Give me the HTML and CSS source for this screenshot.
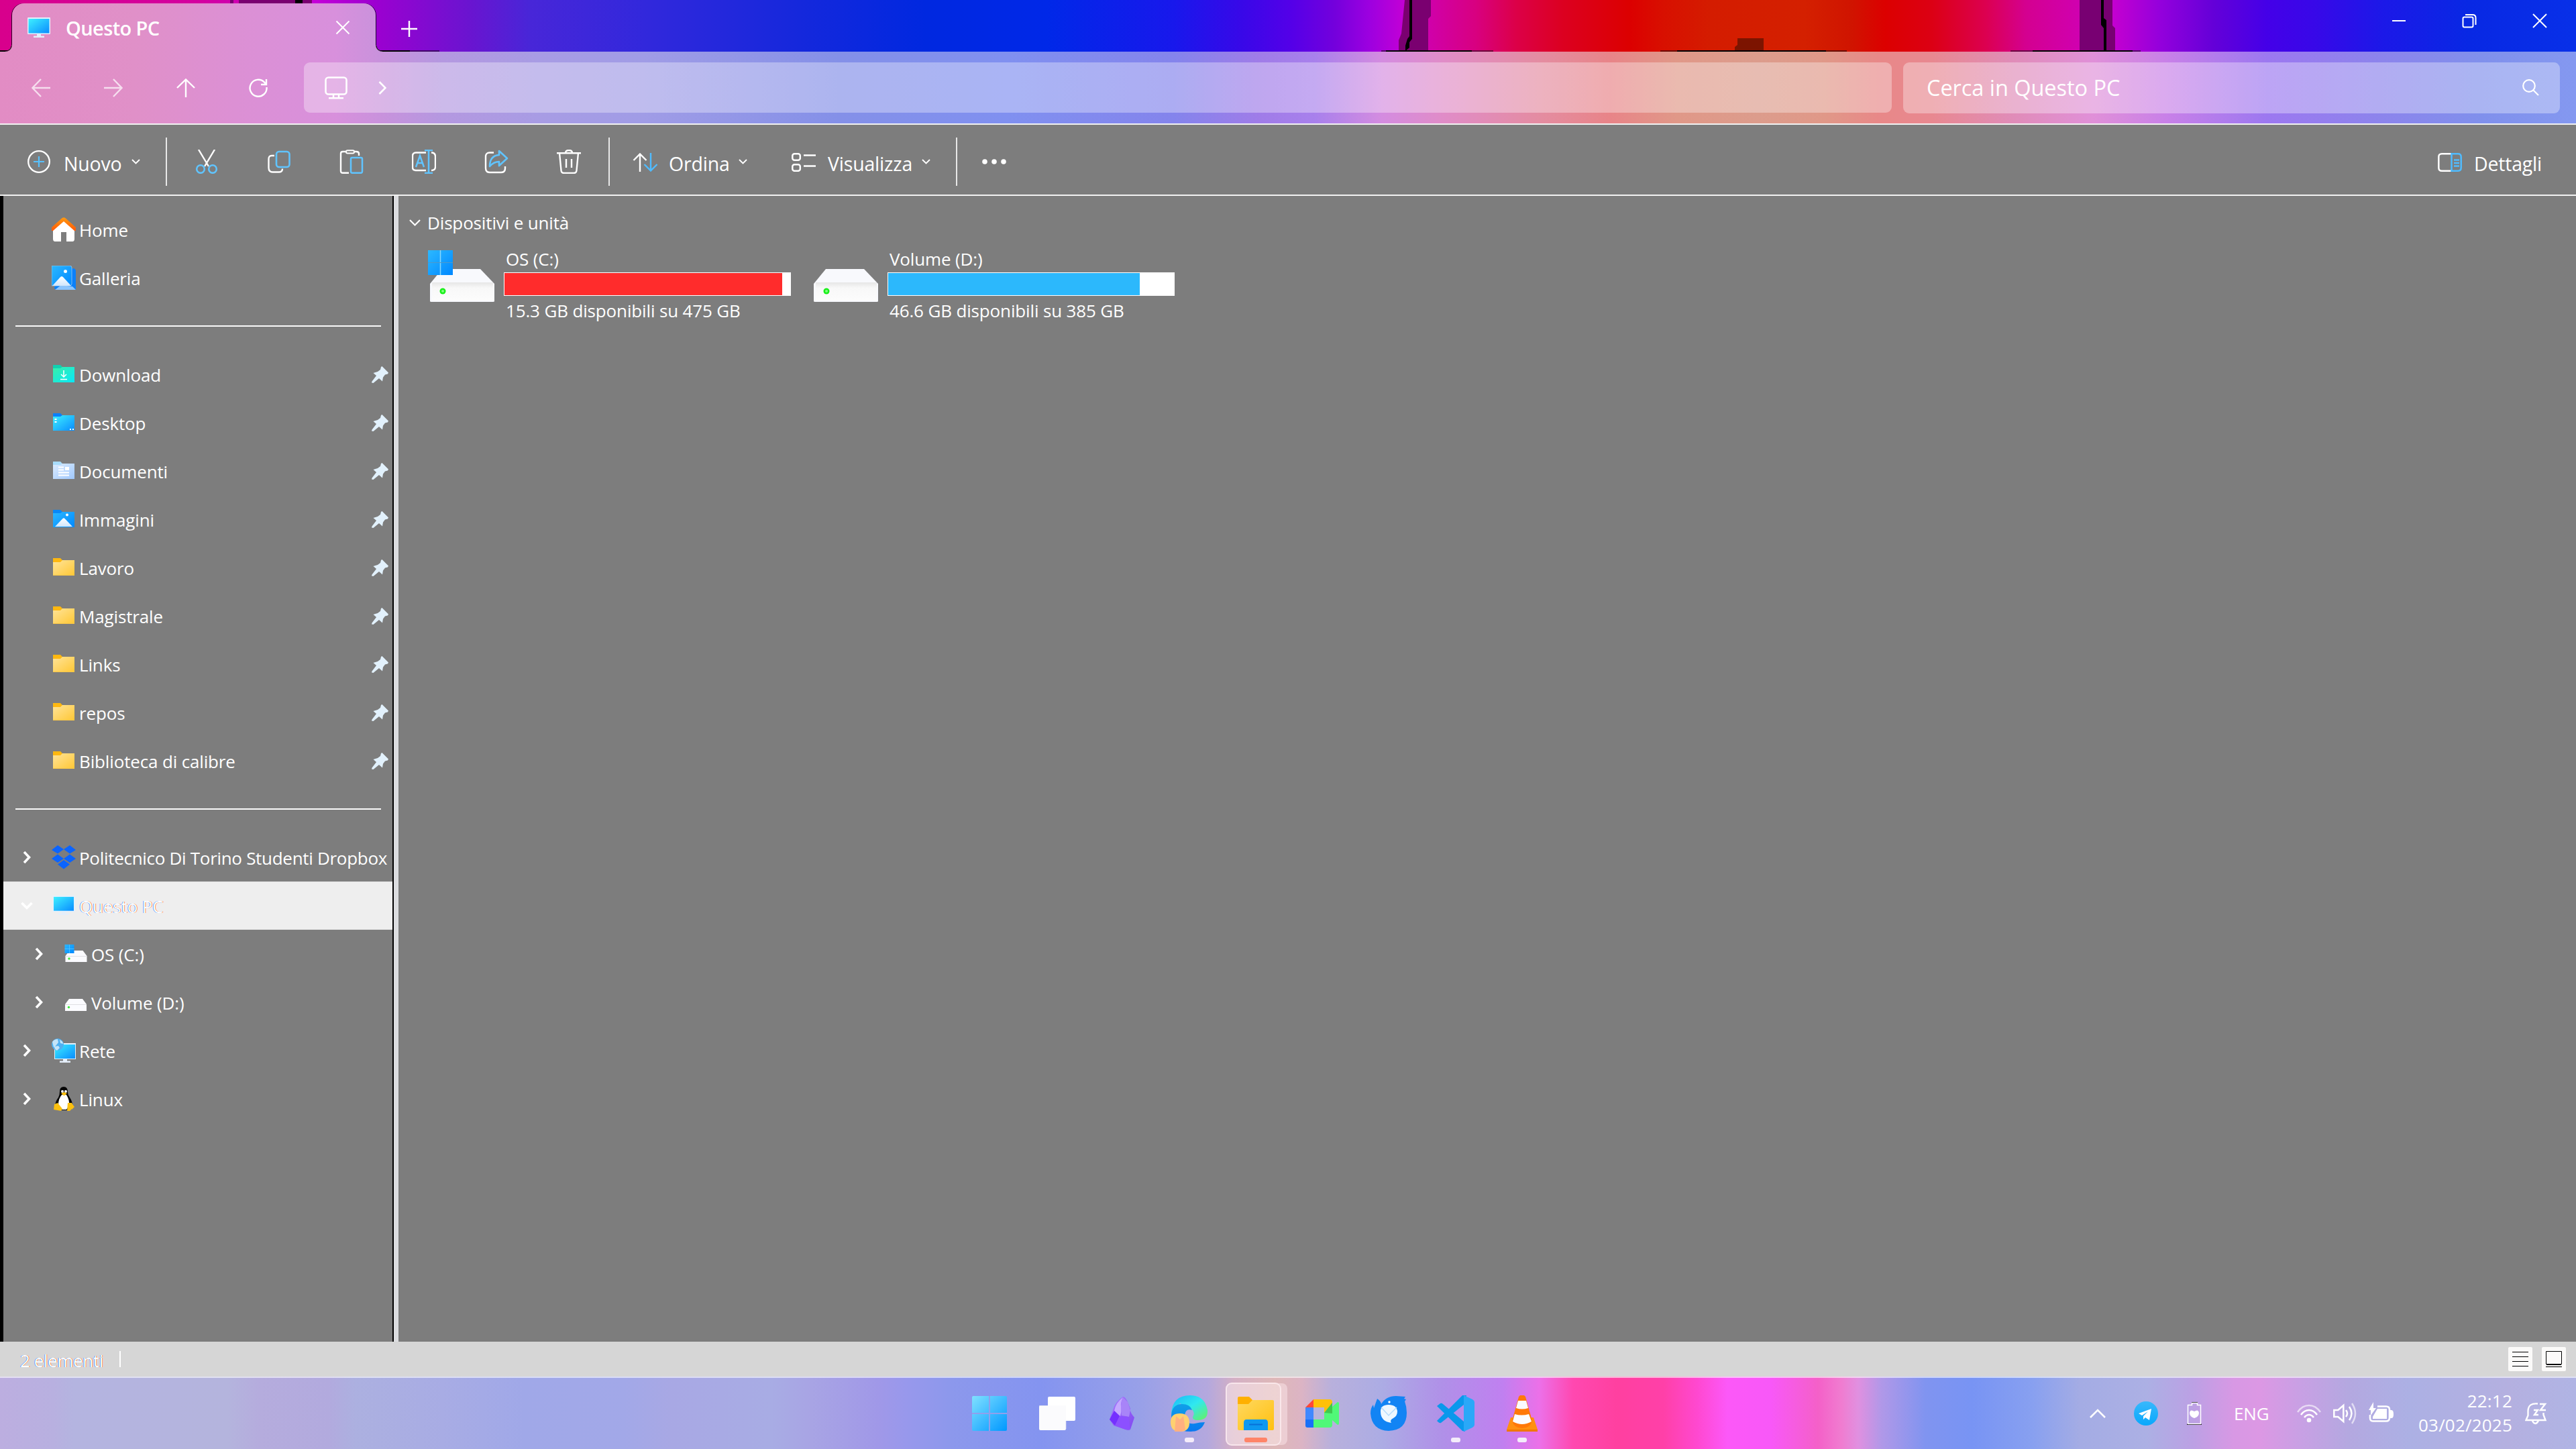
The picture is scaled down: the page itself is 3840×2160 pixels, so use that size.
FILE: index.html
```html
<!DOCTYPE html>
<html lang="it">
<head>
<meta charset="utf-8">
<title>Questo PC</title>
<link rel="stylesheet" href="styles.css">
</head>
<body>
<svg class="defs" aria-hidden="true">
  <defs>
    <linearGradient id="gScreen" x1="0" y1="0" x2="1" y2="1"><stop offset="0" stop-color="#3df0ff"/><stop offset="1" stop-color="#0a8cff"/></linearGradient>
    <linearGradient id="gBlue" x1="0" y1="0" x2="1" y2="1"><stop offset="0" stop-color="#2cb8ff"/><stop offset="1" stop-color="#0088ff"/></linearGradient>
    <linearGradient id="gYellow" x1="0" y1="0" x2="1" y2="1"><stop offset="0" stop-color="#ffe49a"/><stop offset="1" stop-color="#ffc734"/></linearGradient>
    <linearGradient id="gGreen" x1="0" y1="0" x2="1" y2="1"><stop offset="0" stop-color="#38f0a8"/><stop offset="1" stop-color="#08e8f8"/></linearGradient>
    <linearGradient id="gDoc" x1="0" y1="0" x2="1" y2="1"><stop offset="0" stop-color="#dcecff"/><stop offset="1" stop-color="#a0c8fc"/></linearGradient>
    <linearGradient id="gRoof" x1="0" y1="0" x2="0" y2="1"><stop offset="0" stop-color="#ff9a10"/><stop offset="1" stop-color="#ff5808"/></linearGradient>
    <linearGradient id="gHill" x1="0" y1="0" x2="0" y2="1"><stop offset="0" stop-color="#fff"/><stop offset="1" stop-color="#cfe6fc"/></linearGradient>
    <linearGradient id="gFront" x1="0" y1="0" x2="0" y2="1"><stop offset="0" stop-color="#e6e6e6"/><stop offset=".3" stop-color="#f8f8f8"/><stop offset="1" stop-color="#fcfcfc"/></linearGradient>
    <linearGradient id="gStart" x1="0" y1="0" x2="1" y2="1"><stop offset="0" stop-color="#80e0ff"/><stop offset="1" stop-color="#0098ff"/></linearGradient>
    <linearGradient id="gEdge" x1="0" y1="0" x2="1" y2="1"><stop offset="0" stop-color="#18b8f8"/><stop offset=".5" stop-color="#30e8f0"/><stop offset="1" stop-color="#68f060"/></linearGradient>
    <linearGradient id="gEdge2" x1="0" y1="0" x2="0" y2="1"><stop offset="0" stop-color="#10a0e8"/><stop offset="1" stop-color="#0878f0"/></linearGradient>
    <linearGradient id="gExp" x1="0" y1="0" x2="1" y2="1"><stop offset="0" stop-color="#ffd860"/><stop offset="1" stop-color="#ffc010"/></linearGradient>
    <linearGradient id="gTel" x1="0" y1="0" x2="0" y2="1"><stop offset="0" stop-color="#38b8fc"/><stop offset="1" stop-color="#08a8fc"/></linearGradient>
    <linearGradient id="gObs" x1="0" y1="0" x2="1" y2="1"><stop offset="0" stop-color="#a878ff"/><stop offset="1" stop-color="#8048f0"/></linearGradient>
    <symbol id="pc" viewBox="0 0 34 30"><rect x="0" y="0" width="34" height="25" rx="1" fill="#e4f0fc"/><rect x="1.500" y="2" width="31" height="21.500" fill="url(#gScreen)"/><path d="M14 25h6v2.500h5V30H9v-2.500h5z" fill="#e4eefa"/></symbol>
    <symbol id="home" viewBox="0 0 36 36"><path d="M2 18 18 3l16 15v14q0 4-3 4h-9V22h-8v14H5q-3 0-3-4z" fill="#fff"/><path d="M0 20v-5L15 1.500q3-2.500 6 0L36 15v5h-2L18 6 2 20z" fill="url(#gRoof)"/></symbol>
    <symbol id="gallery" viewBox="0 0 36 36"><path d="M31 4q5 0 5 4v28H8q-4 0-4-4z" fill="#0a80fa"/><path d="M5 36 14 29 31 31 36 36z" fill="#8cc4fc"/><path d="M0 0h27q3 0 3 3v24q0 3-3 3H0z" fill="url(#gBlue)" stroke="#a0c8ec" stroke-width=".8"/><path d="M1 30 13 17q2-2 4 0l12 13z" fill="url(#gHill)"/><circle cx="20.500" cy="8.500" r="2.500" fill="#fff"/></symbol>
    <symbol id="folder" viewBox="0 0 32 26"><path d="M0 0h11l3 3h18v22H0z" fill="#ffb810"/><path d="M0 6h11l3-3h18v23H0z" fill="url(#gYellow)"/><path d="M0 25.500h32" stroke="#fcc848"/></symbol>
    <symbol id="f-download" viewBox="0 0 32 26"><path d="M0 0h11l3 3h18v22H0z" fill="#10d0b0"/><path d="M0 5h11l3-2h18v23H0z" fill="url(#gGreen)"/><path d="M16 8v10m-4-4 4 4 4-4M11 21.500h10" fill="none" stroke="#fff" stroke-width="1.500"/></symbol>
    <symbol id="f-desktop" viewBox="0 0 32 26"><path d="M0 0h11l3 3h18v22H0z" fill="#0a80f8"/><path d="M0 5h11l3-2h18v23H0z" fill="url(#gScreen)"/><path d="M2.500 9h3m-3 4h3M25 24h2m2 0h2" stroke="#fff" stroke-width="2"/></symbol>
    <symbol id="f-docs" viewBox="0 0 32 26"><path d="M0 0h11l3 3h18v22H0z" fill="#a8dcfc"/><path d="M0 5h11l3-2h18v23H0z" fill="url(#gDoc)"/><path d="M8 8.500h8M8 12.500h8M8 16.500h16M8 20.500h16" stroke="#fff" stroke-width="1.800"/><rect x="18" y="8" width="6" height="5" fill="#fff"/></symbol>
    <symbol id="f-pics" viewBox="0 0 32 26"><path d="M0 0h11l3 3h18v22H0z" fill="#0888f8"/><path d="M0 5h11l3-2h18v23H0z" fill="url(#gBlue)"/><path d="m3 25 11.500-12q1.500-1.500 3 0L29 25z" fill="url(#gHill)"/><circle cx="21" cy="7.500" r="2" fill="#fff"/></symbol>
    <symbol id="pin" viewBox="0 0 25 25"><path d="m14 1 1.500-1L25 9.500l-1 2-4 1-3 4-1 6L11 18l-8.500 7-2.500-.5.500-2L7 14 2.500 10 9 8l4-3z" fill="#e2f1fc"/></symbol>
    <symbol id="dropbox" viewBox="0 0 36 36"><path d="m9 0 9 6-9 6.500L0 7zM27 0l9 7-9 5.500L18 6zM9 13.500l9 6.500-9 6-9-6zM27 13.500l9 6.500-9 6-9-6zM18 22l9 6.500-9 7-9-7z" fill="#0a64ff"/></symbol>
    <symbol id="drive" viewBox="0 0 32 18"><path d="M6 0h20l6 8v10H0V8z" fill="#fbfbff"/><path d="M0 8.500h32" stroke="#e0e0e4"/><circle cx="5.500" cy="12.500" r="1.700" fill="#40e840"/></symbol>
    <symbol id="windrive" viewBox="0 0 33 26"><path d="M7 9h20l6 8v9H1v-9z" fill="#fbfbff"/><path d="M1 17.500h32" stroke="#e0e0e4"/><circle cx="6.500" cy="21" r="1.700" fill="#40e840"/><rect width="14" height="13" fill="url(#gBlue)"/><path d="M7 0v13M0 6.500h14" stroke="#58c8fc" stroke-width=".8"/></symbol>
    <symbol id="net" viewBox="0 0 36 36"><rect x="4" y="7" width="32" height="24" fill="#e4f0fc"/><rect x="5" y="9" width="30" height="21" fill="url(#gScreen)"/><path d="M17 31h6v2.500h5V36H12v-2.500h5z" fill="#e4eefa"/><circle cx="9" cy="9" r="9" fill="#50b0f0"/><path d="M1 5q3-4 8-4l1 5-4 5-3 2zM12 2q5 2 5 6l-4-1zM4 12l6-1 2 3-4 4q-4-2-4-6z" fill="#c4e4f8"/></symbol>
    <symbol id="tux" viewBox="0 0 32 36"><path d="M16 0q6 0 6 8 0 4 3 8 4 6 4 12l-6 7H9l-6-7q1-7 5-12 2-4 2-9 0-7 6-7z" fill="#050505"/><path d="M13 12h7q5 8 4 16l-4 6h-8l-4-7q0-9 5-15z" fill="#fff"/><circle cx="14" cy="7" r="2" fill="#fff"/><circle cx="19" cy="7" r="2" fill="#fff"/><path d="m12 10 4.500-2 4.500 2-4.500 3.500zM2 26l5-2 7 9-2 3L1 34zM22 24h6l3 6-6 6h-4zM29 26l3 4-4 4z" fill="#fbc010"/></symbol>
    <symbol id="chev-r" viewBox="0 0 12 20"><path d="m2 2 7.500 8L2 18" fill="none" stroke="#fff" stroke-width="3.600"/></symbol>
    <symbol id="chev-d" viewBox="0 0 18 12"><path d="m1.500 2 7.500 7.500L16.500 2" fill="none" stroke="#fff" stroke-width="3.600"/></symbol>
    <symbol id="chev-s" viewBox="0 0 13 8"><path d="m1 1 5.500 5.500L12 1" fill="none" stroke="#fff" stroke-width="1.900"/></symbol>
  </defs>
</svg>
<div class="window">
  <header class="titlebar">
    <svg class="shapes" viewBox="0 0 3840 77">
      <path d="M343 0h5v5h-5zM356 0h84v5h-84zM451 0h14v5h-14z" fill="#7a0070"/><path d="M440 0h11v5h-11z"/>
      <path d="M2094 0h39v24l-4 4v49h-44V60l4-10z" fill="#7a0070"/><path d="M2101 0h4v58l-4 5v8l-6 5v-8l3-10 3-4z"/>
      <path d="M3100 0h49v38l4 4v35h-53z" fill="#780072"/><path d="M3132 0h4v27l4 3v47h-4V42l-4-5z"/>
      <path d="M2590 57h39v20h-43V70l4-3z" fill="#7c1400"/>
      <path d="M2059 75h167v2h-167zM2475 75h278v2h-278zM2997 75h194v2h-194zM611 75h44v2h-44z" opacity=".5"/>
      <path d="M0 75h14v2H0zM566 75h45v2h-45zM2066 75h128v2h-128zM2500 75h222v2h-222zM3030 75h149v2h-149z"/>
    </svg>
    <div class="tab">
      <svg width="34" height="30"><use href="#pc"/></svg>
      <span class="tab-name">Questo PC</span>
      <svg width="22" height="22" viewBox="0 0 22 22"><path d="m1.500 1.500 19 19m0-19-19 19" stroke="#fff" stroke-width="2"/></svg>
    </div>
    <svg class="newtab" width="24" height="24" viewBox="0 0 24 24"><path d="M12 0v24M0 12h24" stroke="#fff" stroke-width="2.400"/></svg>
    <div class="winbtns">
      <svg width="22" height="22" viewBox="0 0 22 22"><path d="M1 11h20" stroke="#fff" stroke-width="2"/></svg>
      <svg width="22" height="22" viewBox="0 0 22 22" fill="none" stroke="#fff" stroke-width="2"><rect x="1.500" y="5.500" width="15" height="15" rx="2"/><path d="M5 2h11q4.500 0 4.500 4.500V17"/></svg>
      <svg width="22" height="22" viewBox="0 0 22 22"><path d="m1 1 20 20m0-20L1 21" stroke="#fff" stroke-width="2"/></svg>
    </div>
  </header>
  <nav class="navbar">
    <div class="navbtns">
      <svg class="dim" width="28" height="28" viewBox="0 0 28 28"><path d="M28 14H2M14 1 1.500 14 14 27"/></svg>
      <svg class="dim" width="28" height="28" viewBox="0 0 28 28"><path d="M0 14h26M14 1l12.500 13L14 27"/></svg>
      <svg width="28" height="28" viewBox="0 0 28 28"><path d="M14 28V2M1 14 14 1.500 27 14"/></svg>
      <svg width="28" height="28" viewBox="0 0 28 28"><path d="M26.500 13A12.500 12.500 0 1 1 23 5.500l2.500 3M26 1v8h-8"/></svg>
    </div>
    <div class="address">
      <svg width="34" height="34" viewBox="0 0 34 34"><rect x="1.500" y="1.500" width="31" height="25" rx="4" fill="none" stroke="#fff" stroke-width="2.600"/><path d="M13 27v5m8-5v5M6 32.300h22" stroke="#fff" stroke-width="2.500"/></svg>
      <svg width="12" height="20" viewBox="0 0 12 20"><path d="m1.500 1 9 9-9 9" fill="none" stroke="#fff" stroke-width="2.600"/></svg>
    </div>
    <div class="search">
      <span>Cerca in Questo PC</span>
      <svg width="25" height="25" viewBox="0 0 25 25" fill="none" stroke="#fff" stroke-width="2.200"><circle cx="10" cy="10" r="8.800"/><path d="m16.500 16.500 7.500 7.500"/></svg>
    </div>
  </nav>
  <div class="toolbar">
    <svg width="34" height="34" viewBox="0 0 34 34" fill="none"><circle cx="17" cy="17" r="15.800" stroke="#fff" stroke-width="2.300"/><path d="M17 9v16M9 17h16" stroke="#58c0fc" stroke-width="2.200"/></svg>
    <span class="t-new">Nuovo</span>
    <svg class="car" width="13" height="8"><use href="#chev-s"/></svg>
    <i class="sep s1"></i>
    <div class="cmds">
      <svg width="36" height="36" viewBox="0 0 36 36" fill="none"><path d="m6 0 15 25M30 0 15 25" stroke="#fff" stroke-width="2.400"/><circle cx="9" cy="29" r="5.800" stroke="#60c4ff" stroke-width="2.500"/><circle cx="27" cy="29" r="5.800" stroke="#60c4ff" stroke-width="2.500"/></svg>
      <svg width="36" height="36" viewBox="0 0 36 36" fill="none"><path d="M11 9H7q-4.500 0-4.500 5v13q0 6.500 6 6.500H18q5 0 5-5" stroke="#fff" stroke-width="2.400"/><rect x="14" y="3" width="19.500" height="23" rx="4" stroke="#60c4ff" stroke-width="2.600"/></svg>
      <svg width="36" height="36" viewBox="0 0 36 36" fill="none"><path d="M14 34.800H5q-3 0-3-3V6q0-3 3-3h6m10 0h4q4 0 4 3v3" stroke="#fff" stroke-width="2.400"/><rect x="10" y="1.200" width="12" height="4.300" rx="2" stroke="#fff" stroke-width="2"/><rect x="17" y="12" width="17" height="22.800" rx="2" stroke="#60c4ff" stroke-width="2.500"/></svg>
      <svg width="36" height="36" viewBox="0 0 36 36" fill="none"><path d="M21 4.500H6q-5 0-5 5v17Q1 31 6 31h15M29 4.500q6 0 6 6v15q0 5.500-6 5.500" stroke="#fff" stroke-width="2.400"/><path d="m6 26 6-17 6 17m-10-6h8M25 1v34M19 1h12M19 35h12" stroke="#60c4ff" stroke-width="2.500"/></svg>
      <svg width="36" height="36" viewBox="0 0 36 36" fill="none"><path d="M14 4.500H8q-6 0-6 6v17Q2 34 8 34h17q6 0 6-6v-3" stroke="#fff" stroke-width="2.400"/><path d="M22 2 34 13 22 24v-6q-8 0-14 7Q8 9 22 8z" stroke="#60c4ff" stroke-width="2.600" stroke-linejoin="round"/></svg>
      <svg width="36" height="36" viewBox="0 0 36 36" fill="none" stroke="#fff" stroke-width="2.400"><path d="M0 5.200h36M13 5q0-4 5-4t5 4M4 5l2.500 26q.3 4 4 4h15q3.700 0 4-4L32 5M14 14v13m8-13v13"/></svg>
    </div>
    <i class="sep"></i>
    <svg class="i-sort" width="38" height="28" viewBox="0 0 38 28" fill="none" stroke-width="2.400"><path d="M11 28V2M1.500 11 11 1.500 20.500 11" stroke="#fff"/><path d="M27 0v26M17.500 17l9.500 9.500L36.500 17" stroke="#50bcff"/></svg>
    <span class="t-sort">Ordina</span>
    <svg class="car" width="13" height="8"><use href="#chev-s"/></svg>
    <svg class="i-view" width="36" height="28" viewBox="0 0 36 28" fill="none" stroke="#fff" stroke-width="2.500"><rect x="1.300" y="1.300" width="11.500" height="9.500" rx="3"/><rect x="1.300" y="17.300" width="11.500" height="9.500" rx="3"/><path d="M18 3.500h18M18 19.500h18"/></svg>
    <span class="t-view">Visualizza</span>
    <svg class="car" width="13" height="8"><use href="#chev-s"/></svg>
    <i class="sep s3"></i>
    <svg class="dots" width="36" height="8" viewBox="0 0 36 8" fill="#fff"><circle cx="4" cy="4" r="3.800"/><circle cx="18" cy="4" r="3.800"/><circle cx="32" cy="4" r="3.800"/></svg>
    <svg class="i-det" width="36" height="28" viewBox="0 0 36 28" fill="none" stroke-width="2.500"><path d="M20 1.300H6q-4.700 0-4.700 4.700v16Q1.300 26.700 6 26.700h14" stroke="#fff"/><path d="M20.500 1.300H30q4.700 0 4.700 4.700v16q0 4.700-4.700 4.700h-9.500zM24 10.500h8M24 15h8M24 19.500h8" stroke="#50bcff"/></svg>
    <span class="t-det">Dettagli</span>
  </div>
  <main class="body">
    <aside class="sidebar">
      <div class="row"><svg class="ico" width="36" height="36"><use href="#home"/></svg><span>Home</span></div>
      <div class="row"><svg class="ico" width="36" height="36"><use href="#gallery"/></svg><span>Galleria</span></div>
      <div class="row"><hr></div>
      <div class="row"><svg class="ico" width="36" height="26"><use href="#f-download"/></svg><span>Download</span><svg class="pin"><use href="#pin"/></svg></div>
      <div class="row"><svg class="ico" width="36" height="26"><use href="#f-desktop"/></svg><span>Desktop</span><svg class="pin"><use href="#pin"/></svg></div>
      <div class="row"><svg class="ico" width="36" height="26"><use href="#f-docs"/></svg><span>Documenti</span><svg class="pin"><use href="#pin"/></svg></div>
      <div class="row"><svg class="ico" width="36" height="26"><use href="#f-pics"/></svg><span>Immagini</span><svg class="pin"><use href="#pin"/></svg></div>
      <div class="row"><svg class="ico" width="36" height="26"><use href="#folder"/></svg><span>Lavoro</span><svg class="pin"><use href="#pin"/></svg></div>
      <div class="row"><svg class="ico" width="36" height="26"><use href="#folder"/></svg><span>Magistrale</span><svg class="pin"><use href="#pin"/></svg></div>
      <div class="row"><svg class="ico" width="36" height="26"><use href="#folder"/></svg><span>Links</span><svg class="pin"><use href="#pin"/></svg></div>
      <div class="row"><svg class="ico" width="36" height="26"><use href="#folder"/></svg><span>repos</span><svg class="pin"><use href="#pin"/></svg></div>
      <div class="row"><svg class="ico" width="36" height="26"><use href="#folder"/></svg><span>Biblioteca di calibre</span><svg class="pin"><use href="#pin"/></svg></div>
      <div class="row"><hr></div>
      <div class="row tree"><svg class="exp"><use href="#chev-r"/></svg><svg class="ico" width="36" height="36"><use href="#dropbox"/></svg><span class="long">Politecnico Di Torino Studenti Dropbox</span></div>
      <div class="row tree selected"><svg class="exp"><use href="#chev-d"/></svg><svg class="ico" width="36" height="29"><use href="#pc"/></svg><span class="ghost">Questo PC</span></div>
      <div class="row tree child"><svg class="exp"><use href="#chev-r"/></svg><svg class="ico" width="36" height="26"><use href="#windrive"/></svg><span>OS (C:)</span></div>
      <div class="row tree child"><svg class="exp"><use href="#chev-r"/></svg><svg class="ico low" width="36" height="18"><use href="#drive"/></svg><span>Volume (D:)</span></div>
      <div class="row tree"><svg class="exp"><use href="#chev-r"/></svg><svg class="ico" width="36" height="36"><use href="#net"/></svg><span>Rete</span></div>
      <div class="row tree"><svg class="exp"><use href="#chev-r"/></svg><svg class="ico" width="36" height="36"><use href="#tux"/></svg><span>Linux</span></div>
    </aside>
    <section class="content">
      <h2><svg width="17" height="10" viewBox="0 0 17 10"><path d="m1 1 7.500 7.500L16 1" fill="none" stroke="#fff" stroke-width="2.200"/></svg>Dispositivi e unità</h2>
      <div class="drives">
        <article class="drive">
          <svg width="100" height="77" viewBox="0 0 100 77"><path d="M21 28h57l21 22v26q0 1-2 1H5q-2 0-2-1V50z" fill="#f8f9fd"/><path d="M6 48h91v27H6z" fill="url(#gFront)"/><circle cx="22" cy="61" r="4.500" fill="#18f018"/><circle cx="22" cy="61" r="2" fill="#80ff80"/><path d="M0 0h37v37H0z" fill="url(#gBlue)"/><path d="M18.500 0v37" stroke="#88d8fc" stroke-width="1.500"/><path d="M0 18.500h37" stroke="#5098c8"/></svg>
          <div class="info"><b>OS (C:)</b><div class="meter"><div class="fill full" style="width:414px"></div></div><span class="free">15.3 GB disponibili su 475 GB</span></div>
        </article>
        <article class="drive">
          <svg width="100" height="77" viewBox="0 0 100 77"><path d="M21 28h57l21 22v26q0 1-2 1H5q-2 0-2-1V50z" fill="#f8f9fd"/><path d="M6 48h91v27H6z" fill="url(#gFront)"/><circle cx="22" cy="61" r="4.500" fill="#18f018"/><circle cx="22" cy="61" r="2" fill="#80ff80"/></svg>
          <div class="info"><b>Volume (D:)</b><div class="meter"><div class="fill" style="width:375px"></div></div><span class="free">46.6 GB disponibili su 385 GB</span></div>
        </article>
      </div>
    </section>
  </main>
  <footer class="status">
    <span class="ghost">2 elementi</span><i></i>
    <svg class="v1" width="36" height="36" viewBox="0 0 36 36"><rect width="36" height="36" rx="2" fill="#fbfaf9"/><path d="M6 7.500h24M6 14.500h24M6 21.500h24M6 28.500h24" stroke="#000"/></svg>
    <svg width="36" height="36" viewBox="0 0 36 36"><rect width="36" height="36" rx="2" fill="#fbfaf9"/><path d="M6.500 6.500h23v19h-23zM7 26.500h22M6 29.500h24" fill="none" stroke="#000"/></svg>
  </footer>
</div>
<div class="taskbar">
  <div class="apps">
    <div class="app"><svg width="52" height="52" viewBox="0 0 52 52" fill="url(#gStart)"><path d="M0 2q0-2 2-2h48q2 0 2 2v48q0 2-2 2H2q-2 0-2-2z"/><path d="M26 0v52M0 26h52" stroke="#90a0ec" stroke-width="2"/></svg></div>
    <div class="app"><svg class="tv" width="54" height="52" viewBox="0 0 54 52"><rect x="13" y="1" width="41" height="36" rx="2" fill="#fff"/><path d="M0 16q0-2 2-2h38v35q0 2-2 2H2q-2 0-2-2z" fill="#fbfbfd"/><path d="M40 37v12M0 14.500h13" stroke="#d8dcf0" opacity=".7"/></svg></div>
    <div class="app"><svg width="38" height="50" viewBox="0 0 38 50"><path d="M20 0q3 0 6 6l5 12q-1 5 6 13l-6 18q-4 2-10-1L6 43 0 34l5-14Q8 8 20 0z" fill="url(#gObs)"/><path d="M20 1q-5 10-2 18l-2 10-9-8Q9 9 20 1z" fill="#c4a8ff"/><path d="m20 1 7 7 4 12-2 10-11-2q-3-16 2-27z" fill="#a884f8"/><path d="m7 21 8 8-7 14-8-9z" fill="#7430ff"/><path d="m16 29 12 1 3 19q-4 1-10-1L8 43z" fill="#8c50ff"/></svg></div>
    <div class="app run"><svg width="56" height="54" viewBox="0 0 56 54"><path d="M1 27Q3 0 29 0q22 0 26 22 1 15-14 15-11 0-7-7 2-4-2-9L14 12z" fill="url(#gEdge)"/><path d="M1 30Q2 13 17 13q12 0 15 9-10-3-11 8 0 14 15 12 8-2 15-2-5 14-21 14Q2 54 1 30z" fill="url(#gEdge2)"/><path d="M0 40Q0 27 14 27t14 14q0 13-14 13T0 40z" fill="#ffd070"/><path d="m6 54 2-23 6 5 5-5 3 20q-8 6-16 3z" fill="#ffb080"/></svg></div>
    <div class="app active"><svg width="54" height="50" viewBox="0 0 54 50"><path d="M0 2q0-2 2-2h15l6 6h29q2 0 2 2v40H0z" fill="#ffb000"/><path d="M0 11h16l6-6h30q2 0 2 2v41q0 2-2 2H2q-2 0-2-2z" fill="url(#gExp)"/><path d="M9 50V39q0-5 4-5h28q4 0 4 5v11z" fill="#0d98f0"/><path d="M17 41.500h20" stroke="#0870d8" stroke-width="2"/></svg></div>
    <div class="app"><svg width="50" height="42" viewBox="0 0 50 42"><path d="M0 12 12 0v12z" fill="#ff4838"/><path d="M12 0h24q4 0 4 4v5L28 20v-8H12z" fill="#ffc008"/><path d="M0 12h12v18H0z" fill="#4088ff"/><path d="M0 30h12v12H3q-3 0-3-3z" fill="#1870f8"/><path d="M28 20 40 11l8-7q2 0 2 2v30q0 2-2 2l-8-7v7q0 4-4 4H12V30h16z" fill="#50f878"/><path d="M28 20 40 5v16z" fill="#40c850"/><path d="M12 12h16v18H12z" fill="#b8b4dc"/></svg></div>
    <div class="app"><svg width="54" height="52" viewBox="0 0 54 52"><path d="M10 4q5 3 6 8Q23 0 38 0l14 1-2 3 3 1-2 3q3 8 3 17 0 26-27 27Q2 51 0 26q0-8 4-13l1 5z" fill="#1284f4"/><path d="M15 23q0-10 12-10t13 10q0 7-6 10-6 3-3 7-16-2-16-17z" fill="#eef8ff"/><path d="m16 17 11 12 12-12" fill="none" stroke="#b4dcfc" stroke-width="1.500"/><circle cx="28" cy="9" r="1.700" fill="#fff"/></svg></div>
    <div class="app run"><svg width="56" height="54" viewBox="0 0 56 54"><path d="M0 38 38 0l6 0-4 14L6 41q-2 1-5-2zM0 16l5-4q2-1 4 1l31 26 2 15-4-1z" fill="#0a98ec"/><path d="M40 0 53 6q3 2 3 4v34q0 2-3 4l-13 6z" fill="#2aa8f8"/></svg></div>
    <div class="app run"><svg width="48" height="54" viewBox="0 0 48 54"><path d="M7 33h34l6 18q0 3-3 3H3q-2 0-2-3z" fill="#ff9010"/><path d="M1 51h46v3H1z" fill="#f07800"/><path d="m19 2 2-2h6l2 2 10 36q-3 11-15 11T9 38z" fill="#ff7808"/><path d="M18 8h12l3 11q-9 3-18 0zM13 28q10 3 21 0l4 11q-14 8-28 0z" fill="#fbfbff"/></svg></div>
  </div>
  <div class="tray">
    <svg width="24" height="14" viewBox="0 0 24 14"><path d="M1 13 12 2l11 11" fill="none" stroke="#fff" stroke-width="2.600"/></svg>
    <svg class="y1" width="36" height="36" viewBox="0 0 36 36"><circle cx="18" cy="18" r="18" fill="url(#gTel)"/><path d="m7 18 19-7-3 17-6-4-3 3v-5l7-7-9 6z" fill="#fff"/></svg>
    <svg class="y2" width="22" height="34" viewBox="0 0 22 34"><path d="M7 .8h9M0 33.200h22" stroke="#111" stroke-width="1.500"/><path d="M7.500 1.500v3h-6v28h19v-28h-5v-3z" fill="none" stroke="#fff" stroke-width="1.500"/><path d="M11 14q6-4 7 2 0 6-7 8-7-2-7-8 1-6 7-2z" fill="#fff"/></svg>
    <span class="lang">ENG</span>
    <svg class="y3" width="36" height="28" viewBox="0 0 36 28" fill="none" stroke="#fff" stroke-width="2.600"><path d="M1 12Q8 2 18 2t17 10" opacity=".6"/><path d="M6 16q5-7 12-7t12 7M11 20q3-4 7-4t7 4"/><circle cx="18" cy="24" r="2" fill="#fff"/></svg>
    <svg class="y3" width="36" height="32" viewBox="0 0 36 32" fill="none" stroke="#fff" stroke-width="2.500"><path d="M1.300 11v10h6l8 7V4l-8 7zM19 11q4 5 0 10M24 6q7 10 0 20"/><path d="M28 1q10 15 0 30" opacity=".6"/></svg>
    <svg class="y3 bat" width="37" height="30" viewBox="0 0 37 30"><path d="M13 6.500h13q5 0 5 5v12q0 5-5 5H6q-4 0-4-5V19" fill="none" stroke="#fff" stroke-width="2.600"/><path d="M13 10h14v15H6v-3zM32 12h2q3 0 3 6t-3 6h-2zM7 0v9h4L3 20v-8H0z" fill="#fff"/></svg>
    <div class="clock"><span>22:12</span><span>03/02/2025</span></div>
    <svg class="y3" width="33" height="33" viewBox="0 0 33 33" fill="none" stroke="#fff" stroke-width="2.400"><path d="M19 1.500Q5 0 4.500 12v7L1.500 26h29l-3-8v-3M11 27q4 8 9 0M22 2h8l-7 9h8M13 11h6l-5 7h6"/></svg>
  </div>
</div>
</body>
</html>
```
FILE: styles.css
```css
* { box-sizing: border-box; }
body {
  --nav: linear-gradient(90deg, #e28cc4 0, #e090c8 200px, #dc90d4 350px, #d890dc 500px, #c892dc 570px, #b498e0 660px, #a89ce4 800px, #a09ce6 960px, #8490e8 1250px, #8090f0 1500px, #8484ec 1750px, #a07ce8 1880px, #a880ec 1960px, #d48ce0 2060px, #e08cc8 2150px, #e48ca0 2300px, #e88488 2400px, #e09888 2500px, #dc9c8c 2620px, #e09888 2720px, #e88888 2800px, #e88890 2880px, #e08cb8 3000px, #e090d8 3120px, #c880e8 3230px, #9c78f0 3380px, #8c84ec 3550px, #8090ec 3700px, #8498f0 3840px);
  margin: 0;
  width: 3840px;
  height: 2160px;
  overflow: hidden;
  display: flex;
  flex-direction: column;
  background: #7d7d7d;
  color: #fff;
  font: 26px "Open Sans", "Noto Sans", sans-serif;
  letter-spacing: -.15px;
}
svg { display: block; flex: none; }
.defs { position: absolute; width: 0; height: 0; }
.window { height: 2052px; display: flex; flex-direction: column; }

.titlebar {
  position: relative;
  height: 77px;
  display: flex;
  padding-left: 18px;
  background: linear-gradient(90deg, #d8008c 0, #d400a0 300px, #c400d8 470px, #9c00d0 560px, #6a14d0 700px, #4826d8 790px, #3228dc 960px, #1428dc 1200px, #0028e0 1380px, #0028e8 1560px, #1818ec 1750px, #3808e8 1850px, #5400e8 1925px, #7400dc 1990px, #9c00e0 2040px, #c800d4 2100px, #d000a8 2133px, #d80080 2200px, #dc0048 2260px, #dc0020 2330px, #dc0000 2430px, #d81000 2480px, #d41c00 2550px, #d42000 2690px, #d01400 2760px, #dc0000 2810px, #dc0014 2880px, #dc0050 2960px, #d40090 3020px, #d000b0 3100px, #c400d0 3150px, #9400dc 3220px, #6400d8 3300px, #4400e8 3380px, #3808e8 3450px, #1c18e8 3550px, #0828e4 3680px, #0830e8 3840px);
}
.shapes { position: absolute; left: 0; top: 0; width: 3840px; height: 77px; }
.tab {
  position: relative;
  width: 542px;
  height: 72px;
  margin-top: 5px;
  padding: 0 38px 0 23px;
  display: flex;
  align-items: center;
  border-radius: 18px 18px 0 0;
  background: var(--nav) -18px 0 / 3840px 100%;
  box-shadow: -1px 0 0 #300028, 1px 0 0 #200038;
}
.tab::before, .tab::after { content: ""; position: absolute; bottom: 0; width: 10px; height: 10px; }
.tab::before { left: -10px; background: radial-gradient(circle at 0 0, transparent 8.500px, #000 9px, #e28cc4 10.500px); }
.tab::after { right: -10px; background: radial-gradient(circle at 100% 0, transparent 8.500px, #000 9px, #c892dc 10.500px); }
.tab-name { flex: 1; margin-left: 23px; font-size: 29px; font-weight: 600; letter-spacing: -.6px; }
.newtab { position: relative; margin: 31px 0 0 38px; }
.winbtns { position: relative; display: flex; gap: 83px; margin: 20px 43px 0 auto; }

.navbar { height: 107px; display: flex; align-items: center; background: var(--nav); }
.navbtns { display: flex; gap: 80px; width: 453px; padding-left: 47px; fill: none; stroke: #fff; stroke-width: 2.400px; }
.dim { opacity: .7; }
.address, .search { display: flex; align-items: center; height: 75px; border-radius: 9px; background: rgba(255, 255, 255, .33); }
.address { width: 2367px; padding-left: 31px; gap: 46px; }
.search { width: 979px; height: 76px; margin-left: 17px; padding: 0 31px 0 35px; justify-content: space-between; font-size: 32.500px; letter-spacing: -.05px; }

.toolbar {
  height: 108px;
  display: flex;
  align-items: center;
  padding: 5px 0 0 41px;
  border-top: 2px solid #f2f2f2;
  border-bottom: 2px solid #f2f2f2;
  font-size: 28.500px;
  letter-spacing: -.2px;
}
.toolbar span { padding-top: 7px; }
.t-new { width: 101px; margin-left: 20px; }
.sep { width: 2px; height: 72px; background: #e8e8e8; }
.s1 { margin-left: 38px; }
.cmds { display: flex; gap: 72px; margin: 0 41px 0 41px; }
.i-sort { margin: 2px 0 0 34px; }
.t-sort { width: 104px; margin-left: 16px; }
.i-view { margin: 2px 0 0 66px; }
.t-view { width: 140px; margin-left: 18px; }
.s3 { margin-left: 38px; }
.dots { margin-left: 37px; }
.i-det { margin: 2px 18px 0 auto; }
.t-det { width: 152px; }

.body { height: 1708px; display: flex; }
.sidebar { width: 587px; padding-top: 14px; border-left: 5px solid #000; border-right: 2px solid #000; }
.row { height: 72px; display: flex; align-items: center; padding: 0 6px 0 72px; white-space: nowrap; }
.row span { margin-left: 5px; padding-top: 2px; }
.row .long { letter-spacing: -.3px; }
.row hr { width: 545px; height: 2px; margin: 0 0 0 -54px; border: 0; background: #fafafa; flex: none; }
.ico[height="26"] { margin-top: -2px; }
.ico[height="29"] { margin-top: -2px; }
.pin { width: 25px; height: 25px; margin: 1px 0 0 auto; }
.tree { padding-left: 26px; }
.exp { width: 18px; height: 20px; margin-right: 28px; }
.child { padding-left: 44px; }
.child .exp { margin-right: 28px; }
.row .low { margin-top: 7px; }
.selected { background: #eee; border: solid #e2e2e2; border-width: 1px 0; }
.ghost { text-shadow: -1px 0 rgba(40, 130, 255, .75), 1px 0 rgba(255, 110, 20, .75); }
.content { flex: 1; border-left: 7px solid #dcdde0; padding: 22px 0 0 16px; }
.content h2 { display: flex; align-items: center; gap: 10px; height: 36px; margin: 0; font-size: 26px; font-weight: 400; }
.drives { display: flex; gap: 43px; margin: 18px 0 0 28px; }
.drive { display: flex; width: 529px; }
.drive > svg { margin-top: 5px; }
.info { width: 428px; margin-left: 13px; }
.info b, .free { display: block; line-height: 36px; font-weight: 400; padding-left: 3px; white-space: nowrap; }
.meter { height: 35px; width: 428px; margin: 2px 0 4px; padding: 1px; background: #fff; }
.fill { height: 33px; background: #2cb8fc; }
.full { background: #ff2c2c; }

.status { height: 52px; display: flex; align-items: center; padding: 0 15px 0 30px; background: #d6d6d6; }
.status span { width: 148px; padding-top: 3px; letter-spacing: -.4px; }
.status i { width: 2px; height: 24px; background: #fff; }
.v1 { margin: 0 14px 0 auto; }

.taskbar {
  height: 108px;
  display: flex;
  padding-left: 1424px;
  border-top: 2px solid rgba(255, 255, 255, .6);
  background: linear-gradient(90deg, #bcaee0 0, #b8b0e0 80px, #b4b4e0 110px, #b4b4dd 340px, #b5acdd 385px, #b2aade 490px, #acb0e0 530px, #a8ace4 660px, #a0a8e8 780px, #a2a8e8 930px, #a8a8e4 1000px, #a8ace4 1150px, #a8a4e4 1210px, #a098e8 1310px, #9898ec 1350px, #8c98ec 1420px, #8494f0 1550px, #98a0e8 1700px, #b4a8de 1800px, #d4b0c4 1840px, #deb8b8 1900px, #dcb4c4 1940px, #b8b0dc 1985px, #acace4 2060px, #b090e8 2150px, #c080f0 2240px, #ec70e8 2295px, #ff48b0 2345px, #ff40a0 2410px, #ff40a8 2480px, #ff48d0 2530px, #fc58f8 2575px, #f858f8 2640px, #f460c8 2710px, #f07cd0 2745px, #e090e0 2770px, #b098e8 2805px, #8094f0 2870px, #7894f4 2940px, #88a0f0 3030px, #a4ace4 3100px, #acb0e4 3200px, #bca0e4 3270px, #d898e4 3330px, #dc98e4 3370px, #c8a0e4 3430px, #b4a8e0 3500px, #acb0e4 3590px, #b4b0e0 3740px, #b0b4e4 3840px) border-box;
}
.apps { display: flex; width: 895px; padding-left: 1px; }
.app { position: relative; width: 99.300px; display: flex; align-items: center; justify-content: center; }
.tv { margin-left: 5px; }
.run::after, .active::after { content: ""; position: absolute; bottom: 10px; width: 14px; height: 7px; border-radius: 3px; background: #f4ecfa; }
.active::after { width: 34px; background: #ff8468; }
.active::before { content: ""; position: absolute; left: 5px; top: 7px; width: 79px; height: 90px; border: 2px solid rgba(255, 240, 244, .7); border-radius: 9px; background: rgba(255, 240, 240, .48); box-shadow: 10px 0 0 -1px rgba(255, 236, 240, .45); }
.app svg { position: relative; }
.tray { display: flex; align-items: center; flex: 1; padding-left: 796px; }
.y1 { margin-left: 42px; }
.y2 { margin-left: 43px; }
.lang { width: 94px; margin-left: 48px; }
.y3 { margin-right: 18px; }
.tray .bat { margin: -4px 19px 0 -1px; }
.clock { display: flex; flex-direction: column; width: 158px; line-height: 36px; letter-spacing: .2px; align-items: flex-end; margin-right: 19px; padding-bottom: 3px; }
```
